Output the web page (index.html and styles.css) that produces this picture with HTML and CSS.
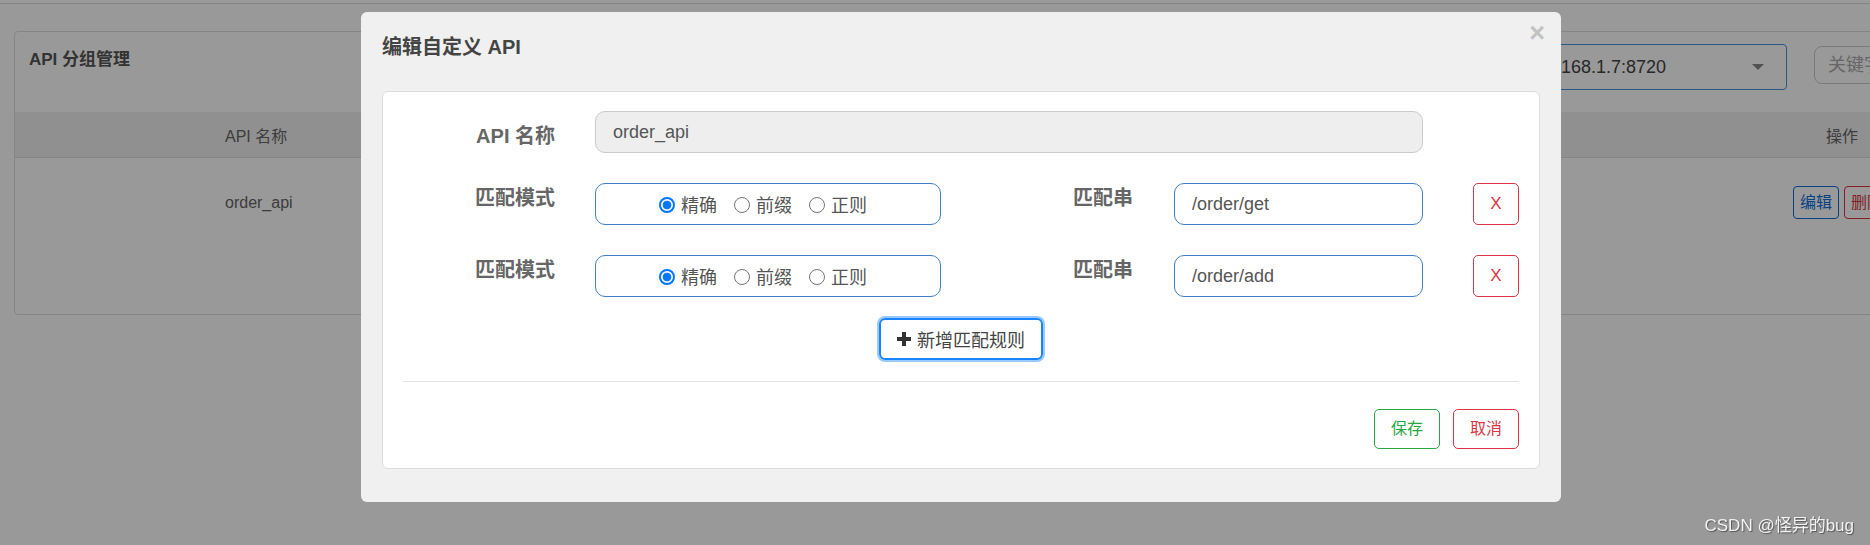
FILE: index.html
```html
<!DOCTYPE html>
<html lang="zh-CN">
<head>
<meta charset="utf-8">
<title>编辑自定义 API</title>
<link rel="stylesheet" href="styles.css">
</head>
<body>
<div class="page">
  <div class="topbar"></div>
  <div class="card">
    <div class="card-head">
      <h3 class="card-title">API 分组管理</h3>
      <div class="select"><span class="select-text">192.168.1.7:8720</span><span class="caret"></span></div>
      <div class="search">关键字</div>
    </div>
    <div class="trow thead">
      <div class="cell-name">API 名称</div>
      <div class="cell-op"><span class="op-title">操作</span></div>
    </div>
    <div class="trow tbody">
      <div class="cell-name">order_api</div>
      <div class="cell-op"><span class="btn-sm blue">编辑</span><span class="btn-sm red">删除</span></div>
    </div>
  </div>
</div>

<div class="backdrop"></div>

<div class="modal">
  <div class="modal-head">
    <h4 class="modal-title">编辑自定义 API</h4>
    <span class="close">×</span>
  </div>
  <div class="panel">
    <div class="frow">
      <label class="flabel first">API 名称</label>
      <div class="input ro wide">order_api</div>
    </div>
    <div class="frow">
      <label class="flabel">匹配模式</label>
      <div class="radios">
        <span class="ritem"><i class="radio on"></i>精确</span>
        <span class="ritem"><i class="radio"></i>前缀</span>
        <span class="ritem"><i class="radio"></i>正则</span>
      </div>
      <label class="flabel">匹配串</label>
      <div class="input pat">/order/get</div>
      <span class="xbtn">X</span>
    </div>
    <div class="frow last">
      <label class="flabel">匹配模式</label>
      <div class="radios">
        <span class="ritem"><i class="radio on"></i>精确</span>
        <span class="ritem"><i class="radio"></i>前缀</span>
        <span class="ritem"><i class="radio"></i>正则</span>
      </div>
      <label class="flabel">匹配串</label>
      <div class="input pat">/order/add</div>
      <span class="xbtn">X</span>
    </div>
    <div class="addrow">
      <span class="addbtn"><svg class="plus" viewBox="0 0 14 14" width="14" height="14"><path d="M5 0h4v5h5v4h-5v5h-4v-5h-5v-4h5z" fill="#333"/></svg>新增匹配规则</span>
    </div>
    <div class="divider"></div>
    <div class="footer">
      <span class="fbtn green">保存</span>
      <span class="fbtn red">取消</span>
    </div>
  </div>
</div>

<div class="watermark">CSDN @怪异的bug</div>
</body>
</html>
```

FILE: styles.css
```css
* { box-sizing: border-box; }

html, body {
  margin: 0;
  padding: 0;
  width: 1870px;
  height: 545px;
  overflow: hidden;
  background: #fff;
  font-family: "Liberation Sans", "Noto Sans CJK SC", sans-serif;
  color: #333;
}

/* ---------- underlying page ---------- */
.page {
  width: 1870px;
  height: 545px;
  overflow: hidden;
}

.topbar {
  height: 4px;
  border-bottom: 1px solid #dcdcdc;
}

.card {
  margin: 27px 0 0 14px;
  width: 2015px;
  height: 284px;
  border: 1px solid #dedede;
  border-radius: 4px;
}

.card-head {
  height: 80px;
  padding: 0 14px;
  display: grid;
  grid-template-columns: 1fr 276px 200px;
  column-gap: 27px;
  align-items: start;
}

.card-title {
  margin: 16px 0 0;
  font-size: 17px;
  line-height: 24px;
  font-weight: bold;
  color: #555;
}

.select {
  margin-top: 12px;
  height: 46px;
  border: 1px solid #4a8fdc;
  border-radius: 4px;
  display: flex;
  align-items: center;
  padding: 0 22px 0 14px;
}

.select-text {
  font-size: 18px;
  color: #444;
  flex: 1;
}

.caret {
  width: 0;
  height: 0;
  border-left: 6px solid transparent;
  border-right: 6px solid transparent;
  border-top: 6px solid #888;
}

.search {
  margin-top: 14px;
  height: 38px;
  border: 1px solid #ccc;
  border-radius: 8px;
  padding-left: 13px;
  font-size: 18px;
  line-height: 36px;
  color: #aaa;
}

.trow {
  display: flex;
  font-size: 16px;
  color: #666;
}

.thead {
  height: 46px;
  background: #f1f1f1;
  border-bottom: 1px solid #dedede;
  align-items: center;
}

.cell-name {
  width: 1778px;
  padding-left: 210px;
}

.op-title {
  padding-left: 33px;
}

.tbody {
  padding-top: 28px;
  line-height: 33px;
}

.btn-sm {
  display: inline-block;
  height: 33px;
  padding: 0 6px;
  border: 1px solid;
  border-radius: 4px;
  font-size: 16px;
  line-height: 31px;
  margin-right: 5px;
}

.btn-sm.blue { color: #0a6fe0; border-color: #0a6fe0; }
.btn-sm.red { color: #dc3545; border-color: #dc3545; }

/* ---------- overlay ---------- */
.backdrop {
  position: fixed;
  inset: 0;
  background: rgba(0, 0, 0, 0.4);
}

.modal {
  position: absolute;
  left: 361px;
  top: 12px;
  width: 1200px;
  background: #f0f0f0;
  border-radius: 6px;
  padding: 21px 21px 33px;
}

.modal-head {
  height: 28px;
  margin-bottom: 30px;
}

.modal-title {
  margin: 0;
  font-size: 20px;
  line-height: 28px;
  font-weight: bold;
  color: #444;
}

.close {
  position: absolute;
  right: 16px;
  top: 6px;
  font-size: 27px;
  line-height: 30px;
  font-weight: bold;
  color: #c2c2c2;
}

.panel {
  background: #fff;
  border: 1px solid #dcdcdc;
  border-radius: 6px;
  padding: 19px 20px 19px;
}

.frow {
  display: flex;
  align-items: flex-start;
  height: 42px;
  margin-bottom: 30px;
}

.frow.last {
  margin-bottom: 21px;
}

.flabel {
  width: 152px;
  flex: none;
  text-align: right;
  font-size: 20px;
  line-height: 20px;
  font-weight: bold;
  color: #666;
  margin-top: 5px;
}

.flabel.first {
  margin-top: 15px;
}

.radios + .flabel {
  margin-left: 40px;
}

.input {
  flex: none;
  height: 42px;
  border: 1px solid #3f7fc3;
  border-radius: 10px;
  padding: 0 17px;
  font-size: 18px;
  line-height: 40px;
  color: #555;
}

.input.ro {
  background: #eee;
  border-color: #cbcbcb;
}

.input.wide {
  margin-left: 40px;
  width: 828px;
}

.input.pat {
  margin-left: 41px;
  width: 249px;
}

.radios {
  flex: none;
  margin-left: 40px;
  width: 346px;
  height: 42px;
  border: 1px solid #3f7fc3;
  border-radius: 10px;
  display: flex;
  align-items: center;
  justify-content: center;
  padding: 4px 10px 0 0;
  font-size: 18px;
  line-height: 24px;
  color: #555;
}

.ritem {
  display: flex;
  align-items: center;
}

.ritem + .ritem {
  margin-left: 17px;
}

.radio {
  width: 16px;
  height: 16px;
  border-radius: 50%;
  border: 1px solid #767676;
  background: #fff;
  margin-right: 6px;
  margin-top: -3px;
}

.radio.on {
  border: 2px solid #0075ff;
  background: radial-gradient(circle, #0075ff 0 4px, #fff 4.7px);
}

.xbtn {
  flex: none;
  margin-left: 50px;
  width: 46px;
  height: 42px;
  border: 1px solid #dc3545;
  border-radius: 5px;
  color: #dc3545;
  font-size: 17px;
  line-height: 40px;
  text-align: center;
}

.addrow {
  display: flex;
  justify-content: center;
  height: 42px;
  margin-bottom: 21px;
}

.addbtn {
  width: 164px;
  height: 42px;
  border: 2px solid #1a84ff;
  border-radius: 6px;
  box-shadow: 0 0 0 2px rgba(0, 123, 255, 0.4);
  display: flex;
  align-items: center;
  justify-content: center;
  font-size: 18px;
  color: #444;
}

.plus {
  margin-right: 6px;
}

.divider {
  height: 1px;
  background: #e3e3e3;
}

.footer {
  margin-top: 27px;
  display: flex;
  justify-content: flex-end;
  gap: 13px;
}

.fbtn {
  width: 66px;
  height: 40px;
  border: 1px solid;
  border-radius: 5px;
  font-size: 16px;
  line-height: 38px;
  text-align: center;
}

.fbtn.green { color: #28a745; border-color: #28a745; }
.fbtn.red { color: #dc3545; border-color: #dc3545; }

.watermark {
  position: absolute;
  right: 16px;
  bottom: 8px;
  font-size: 17px;
  line-height: 22px;
  color: #f2f2f2;
  text-shadow: 1px 1px 1px #555;
}
```
